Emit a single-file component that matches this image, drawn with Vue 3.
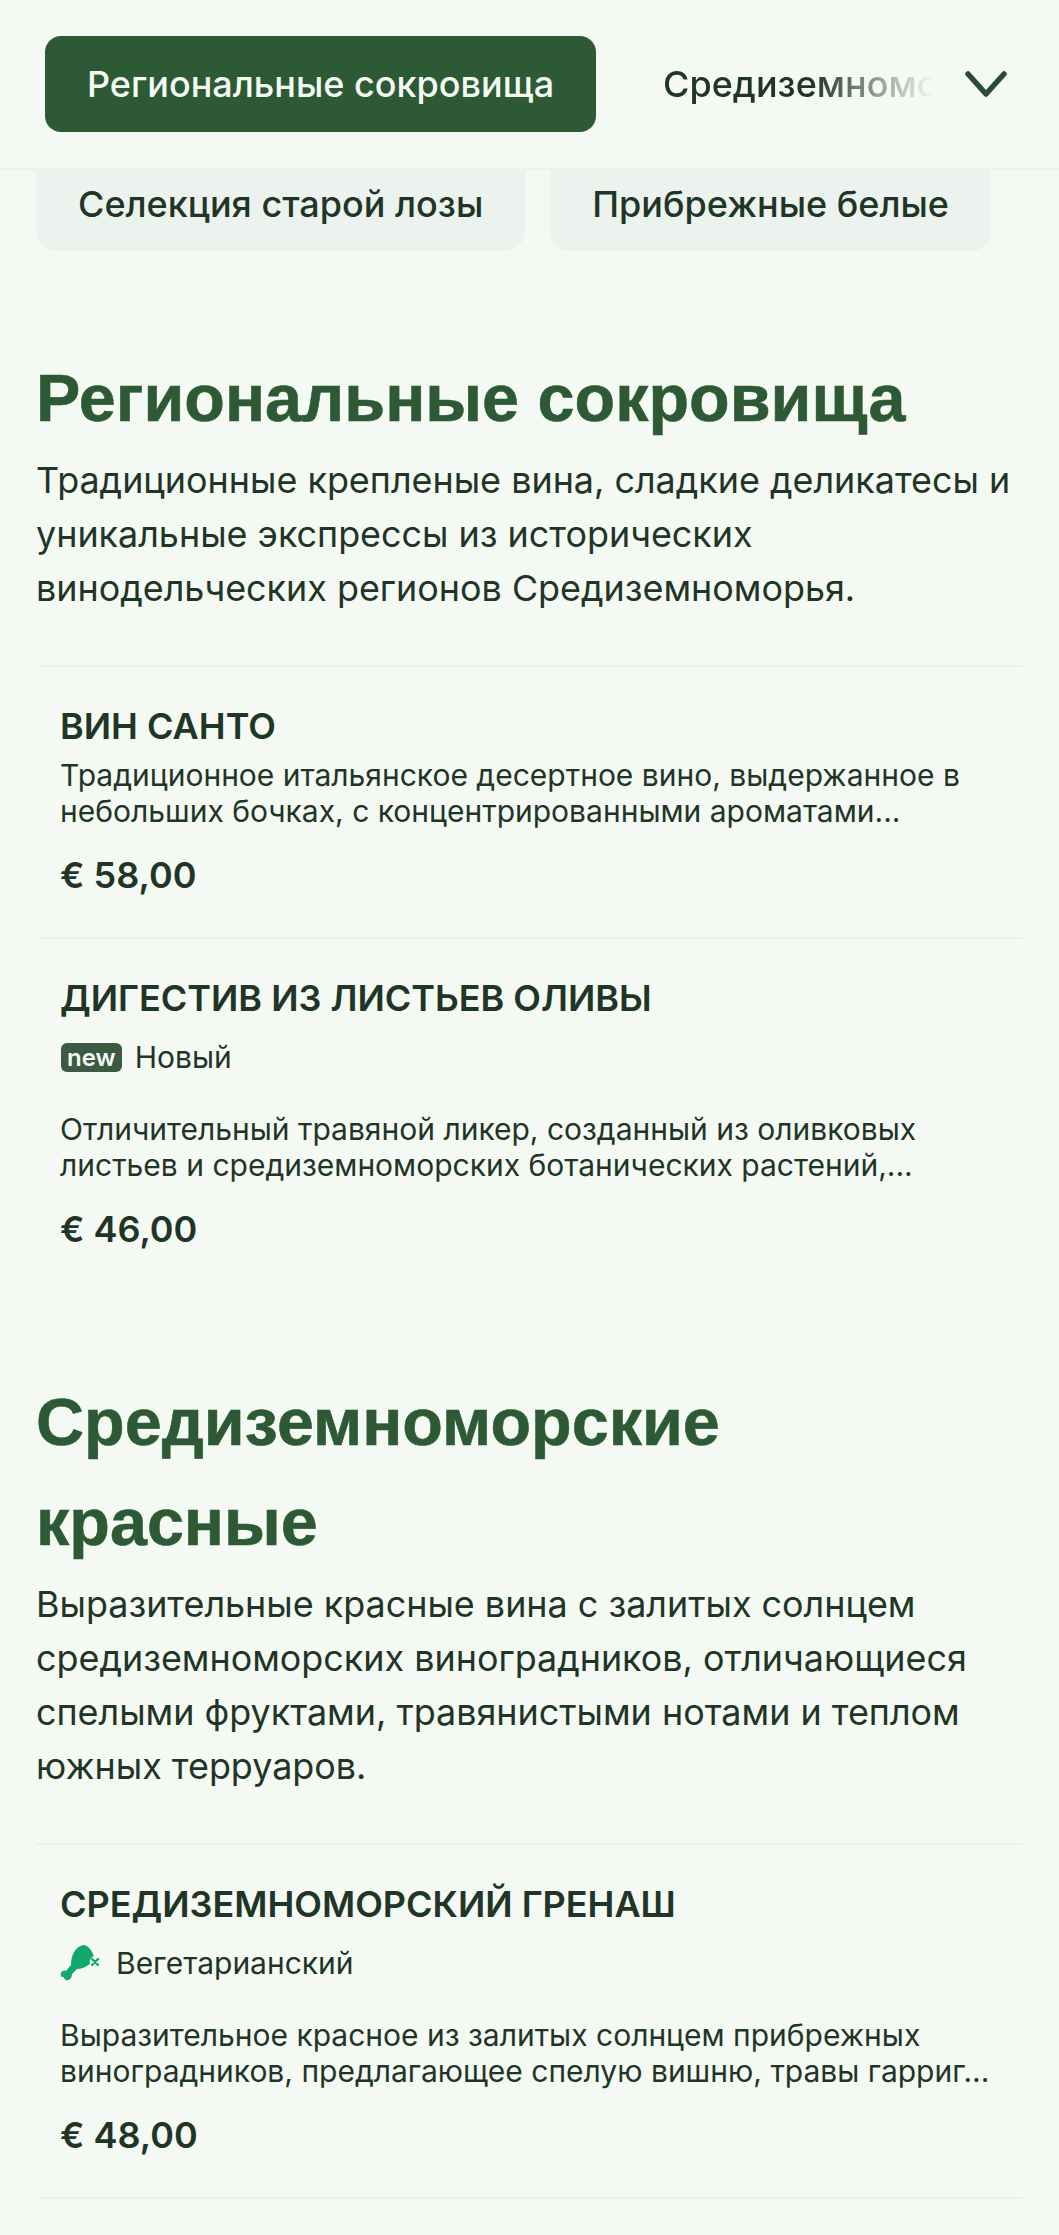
<script setup>
const sections = [
  {
    title: 'Региональные сокровища',
    desc: 'Традиционные крепленые вина, сладкие деликатесы и уникальные экспрессы из исторических винодельческих регионов Средиземноморья.',
    items: [
      { name: 'ВИН САНТО', desc: 'Традиционное итальянское десертное вино, выдержанное в небольших бочках, с концентрированными ароматами...', price: '€ 58,00' },
      { name: 'ДИГЕСТИВ ИЗ ЛИСТЬЕВ ОЛИВЫ', tag: 'new', tagText: 'Новый', desc: 'Отличительный травяной ликер, созданный из оливковых листьев и средиземноморских ботанических растений,...', price: '€ 46,00' }
    ]
  },
  {
    title: 'Средиземноморские красные',
    desc: 'Выразительные красные вина с залитых солнцем средиземноморских виноградников, отличающиеся спелыми фруктами, травянистыми нотами и теплом южных терруаров.',
    items: [
      { name: 'СРЕДИЗЕМНОМОРСКИЙ ГРЕНАШ', tag: 'veg', tagText: 'Вегетарианский', desc: 'Выразительное красное из залитых солнцем прибрежных виноградников, предлагающее спелую вишню, травы гарриг...', price: '€ 48,00' }
    ]
  }
]
</script>

<template>
  <div class="page">
    <header class="topbar">
      <div class="active-tab">Региональные сокровища</div>
      <div class="fade-tab">Средиземноморские красные</div>
      <svg class="chev" viewBox="0 0 44 28" fill="none"><path d="M4 4 L22 24 L40 4" stroke="#2d4a35" stroke-width="5.5" stroke-linecap="round" stroke-linejoin="round"/></svg>
    </header>
    <div class="chips">
      <div class="chip">Селекция старой лозы</div>
      <div class="chip">Прибрежные белые</div>
    </div>
    <section v-for="s in sections" :key="s.title" class="section">
      <h2>{{ s.title }}</h2>
      <p class="lead">{{ s.desc }}</p>
      <div class="list">
        <article v-for="it in s.items" :key="it.name" class="item">
          <h3>{{ it.name }}</h3>
          <div v-if="it.tag" class="tagline">
            <span v-if="it.tag === 'new'" class="new">new</span>
            <svg v-else class="veg" viewBox="0 0 40 36">
              <path d="M24 0 C29 1 32 6 34 11 C31 12 29 15 30 19 C26 22 21 24 17 24 L12 29 C12 33 9 36 6 35 C4 34 4 33 4 32 C2 33 0 31 1 28 C2 26 4 25 6 26 L11 20 C11 11 15 1 24 0 Z" fill="#12a86b"/>
              <path d="M32 14 L38 20 M38 14 L32 20" stroke="#12a86b" stroke-width="2.4" stroke-linecap="round"/>
            </svg>
            <span>{{ it.tagText }}</span>
          </div>
          <p class="desc" :class="{ tagged: it.tag }">{{ it.desc }}</p>
          <div class="price">{{ it.price }}</div>
        </article>
      </div>
    </section>
  </div>
</template>

<style>
html, body { margin: 0; background: #f4f9f4; }
</style>

<style scoped>
.page {
  width: 1059px;
  height: 2235px;
  overflow: hidden;
  background: #f4f9f4;
  font-family: Inter, "Noto Sans", sans-serif;
  color: #1f3526;
}
.topbar {
  position: relative;
  z-index: 2;
  height: 168px;
  display: flex;
  align-items: center;
  background: #f4f9f4;
  border-bottom: 2px solid #edf2ed;
  padding-left: 45px;
}
.active-tab {
  width: 551px;
  height: 96px;
  border-radius: 16px;
  background: #2d5a34;
  color: #f4f9f4;
  font-size: 36px;
  font-weight: 500;
  display: flex;
  align-items: center;
  justify-content: center;
  flex: none;
}
.fade-tab {
  margin-left: 67px;
  width: 271px;
  font-size: 36px;
  font-weight: 500;
  white-space: nowrap;
  overflow: hidden;
  color: #1f3526;
  -webkit-mask-image: linear-gradient(to right, #000 55%, transparent 100%);
  mask-image: linear-gradient(to right, #000 55%, transparent 100%);
  flex: none;
}
.chev {
  margin-left: 30px;
  width: 44px;
  height: 28px;
  flex: none;
}
.chips {
  display: flex;
  gap: 25px;
  padding-left: 36px;
  height: 81px;
}
.chip {
  background: #ecf2ed;
  border-radius: 0 0 20px 20px;
  padding: 0 42px 14px;
  font-size: 36px;
  font-weight: 500;
  display: flex;
  align-items: center;
  height: 81px;
  box-sizing: border-box;
}
.section {
  padding: 0 36px;
  margin-bottom: 81px;
}
.chips + .section { margin-top: 97px; }
h2 {
  margin: 0;
  max-width: 960px;
  font-family: "Liberation Sans", Arial, sans-serif;
  font-size: 66.5px;
  line-height: 100px;
  font-weight: 700;
  color: #2d5a34;
  -webkit-text-stroke: 0.6px #2d5a34;
}
.lead {
  margin: 5px 0 0;
  font-size: 35.9px;
  line-height: 54px;
}
.list { margin-top: 50px; }
.item {
  border-top: 2px solid #edf2ed;
  padding: 37px 24px 40px;
}
.item:last-child { border-bottom: 2px solid #edf2ed; }
.list .item + .item:last-child { border-bottom: none; }
h3 {
  margin: 0;
  font-size: 36px;
  line-height: 44px;
  font-weight: 600;
}
.tagline {
  display: flex;
  align-items: center;
  gap: 13px;
  height: 44px;
  margin-top: 15px;
  font-size: 30px;
}
.new {
  background: #3b5a41;
  color: #f4f9f4;
  font-size: 24px;
  font-weight: 600;
  line-height: 29px;
  height: 29px;
  padding: 0 6px;
  margin-left: 1px;
  border-radius: 6px;
}
.veg { width: 40px; height: 36px; margin-right: 3px; }
.desc {
  margin: 9px 0 0;
  font-size: 30px;
  line-height: 36px;
}
.desc.tagged { margin-top: 32px; }
.price {
  margin-top: 24px;
  font-size: 36px;
  line-height: 44px;
  font-weight: 600;
}
</style>
